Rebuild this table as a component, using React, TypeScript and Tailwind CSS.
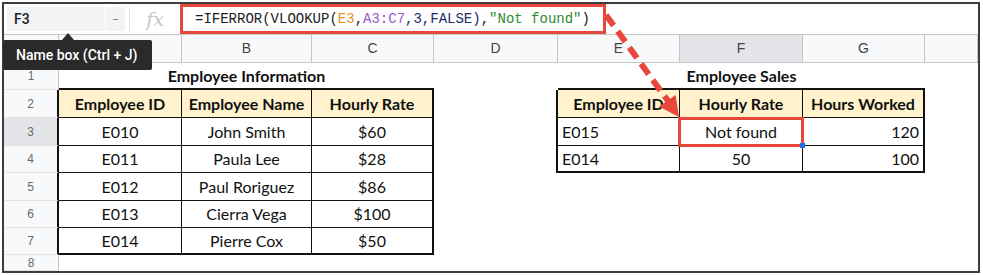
import React from "react"

// "A" sits under the name box tooltip in the reference, so its label is not drawn
const cols = ["", "B", "C", "D", "E", "F", "G", ""]

const employees = [
  ["E010", "John Smith", "$60"],
  ["E011", "Paula Lee", "$28"],
  ["E012", "Paul Roriguez", "$86"],
  ["E013", "Cierra Vega", "$100"],
  ["E014", "Pierre Cox", "$50"],
]

const sales = [
  ["E015", "Not found", "120"],
  ["E014", "50", "100"],
]

const font = "font-['Lato',sans-serif] text-[16px] text-[#111]"

function RowNum({ n, active, tableEdge }: { n: number; active?: boolean; tableEdge?: boolean }) {
  return (
    <div
      className={
        "flex items-center justify-center border-b border-b-[#e2e3e3] font-['Liberation_Sans',sans-serif] text-[12px] text-[#6b6b6b] " +
        (active ? "bg-[#e3e5e8] " : "bg-[#f8f9fa] ") +
        (tableEdge ? "border-r-2 border-r-[#111]" : "border-r border-r-[#c4c7c5]")
      }
    >
      {n}
    </div>
  )
}

function Cell({
  children,
  head,
  lastCol,
  lastRow,
  align = "center",
}: {
  children?: React.ReactNode
  head?: boolean
  lastCol?: boolean
  lastRow?: boolean
  align?: "left" | "center" | "right"
}) {
  return (
    <div
      className={
        "flex items-center px-[4px] border-[#111] " +
        font +
        (head ? " bg-[#fff2cc] font-bold" : " bg-white") +
        (lastCol ? " border-r-2" : " border-r") +
        (lastRow ? " border-b-2" : " border-b") +
        (align === "left" ? " justify-start" : align === "right" ? " justify-end" : " justify-center")
      }
    >
      {children}
    </div>
  )
}

function Blank({ edgeRight, edgeBottom, span }: { edgeRight?: boolean; edgeBottom?: boolean; span?: boolean }) {
  return (
    <div
      className={
        "bg-white border-[#111] " +
        (edgeRight ? "border-r-2 " : "") +
        (edgeBottom ? "border-b-2 " : "") +
        (span ? "col-span-8" : "")
      }
    />
  )
}

export default function App() {
  return (
    <div className="relative w-[983px] h-[275px] bg-white pt-[2px] pl-[2px] overflow-hidden">
      <div className="w-[978px] h-[271px] border-2 border-[#3d3d3d] overflow-hidden flex flex-col">
        {/* name box + formula bar */}
        <div className="h-[31px] shrink-0 flex items-center border-b border-[#c4c7c5]">
          <div className="ml-[3px] w-[98px] h-[24px] bg-[#f1f3f4] flex items-center pl-[7px] font-['Roboto',sans-serif] font-medium text-[14px] text-[#202124]">
            F3
          </div>
          <div className="ml-px w-[19px] h-[24px] bg-[#f1f3f4] flex items-center justify-center">
            <div className="w-[5px] h-px bg-[#8a8a8a]" />
          </div>
          <div className="ml-[4px] w-[51px] h-[24px] border-l border-[#e3e3e3] flex items-center justify-center font-['DejaVu_Serif',serif] italic text-[19px] text-[#c6c6c6]">
            fx
          </div>
          <div className="w-[426px] h-[30px] self-start border-[3px] border-[#e8473b] flex items-center pl-[12px] font-['Liberation_Mono',monospace] text-[14px] text-[#202124] whitespace-pre">
            <span>=IFERROR(VLOOKUP(</span>
            <span className="text-[#e8901a]">E3</span>
            <span>,</span>
            <span className="text-[#9a58c9]">A3:C7</span>
            <span className="text-[#1d2a6b]">,3,FALSE)</span>
            <span>,</span>
            <span className="text-[#2e8a2e]">"Not found"</span>
            <span>)</span>
          </div>
        </div>

        {/* sheet grid */}
        <div className="grid grid-cols-[55px_123px_130px_122px_124px_122px_123px_122px_53px] grid-rows-[28px_27px_28px_28px_27px_28px_27px_27px_16px]">
          <div className="bg-[#f8f9fa] border-r border-b border-[#c4c7c5]" />
          {cols.map((c, i) => (
            <div
              key={i}
              className={
                "flex items-center justify-center border-r border-b border-[#c4c7c5] font-['Liberation_Sans',sans-serif] text-[14px] text-[#444] " +
                (c === "F" ? "bg-[#e3e5e8]" : "bg-[#f8f9fa]")
              }
            >
              {c}
            </div>
          ))}

          {/* row 1 */}
          <RowNum n={1} />
          <div className={"col-span-3 flex items-center justify-center border-b-2 border-[#111] font-bold " + font}>
            Employee Information
          </div>
          <Blank />
          <div className={"col-span-3 flex items-center justify-center border-b-2 border-[#111] font-bold " + font}>
            Employee Sales
          </div>
          <Blank />

          {/* row 2 */}
          <RowNum n={2} tableEdge />
          <Cell head>Employee ID</Cell>
          <Cell head>Employee Name</Cell>
          <Cell head lastCol>Hourly Rate</Cell>
          <Blank edgeRight />
          <Cell head>Employee ID</Cell>
          <Cell head>Hourly Rate</Cell>
          <Cell head lastCol>Hours Worked</Cell>
          <Blank />

          {employees.map((e, r) => (
            <React.Fragment key={e[0]}>
              <RowNum n={r + 3} active={r === 0} tableEdge />
              <Cell lastRow={r === 4}>{e[0]}</Cell>
              <Cell lastRow={r === 4}>{e[1]}</Cell>
              <Cell lastRow={r === 4} lastCol>
                {e[2]}
              </Cell>
              {r < 2 ? (
                <>
                  <Blank edgeRight />
                  <Cell align="left" lastRow={r === 1}>
                    {sales[r][0]}
                  </Cell>
                  <Cell lastRow={r === 1}>{sales[r][1]}</Cell>
                  <Cell align="right" lastRow={r === 1} lastCol>
                    {sales[r][2]}
                  </Cell>
                </>
              ) : (
                <>
                  <Blank />
                  <Blank />
                  <Blank />
                  <Blank />
                </>
              )}
              <Blank />
            </React.Fragment>
          ))}

          <RowNum n={8} />
          <Blank span />
        </div>
      </div>

      {/* Name box tooltip */}
      <div className="absolute left-[3px] top-[40px] w-[149px] h-[30px] bg-[#2a2a2a] rounded-[2px] flex items-center pl-[13px] font-['Roboto',sans-serif] font-medium text-[14px] text-white">
        Name box (Ctrl + J)
      </div>
      <div className="absolute left-[62px] top-[33px] w-0 h-0 border-l-[6px] border-r-[6px] border-b-[7px] border-l-transparent border-r-transparent border-b-[#2a2a2a]" />

      {/* highlight of F3 */}
      <div className="absolute left-[678px] top-[117px] w-[126px] h-[30px] border-[3px] border-[#e8473b]" />
      <div className="absolute left-[800px] top-[143px] w-[5px] h-[5px] bg-[#1a73e8]" />

      {/* dashed arrow */}
      <svg className="absolute inset-0 pointer-events-none" width="983" height="275" viewBox="0 0 983 275">
        <line x1="606" y1="15" x2="668" y2="101" stroke="#e8473b" strokeWidth="6" strokeDasharray="13 7" />
        <polygon points="679,117 659,106.5 675.6,94.9" fill="#e8473b" />
      </svg>
    </div>
  )
}
